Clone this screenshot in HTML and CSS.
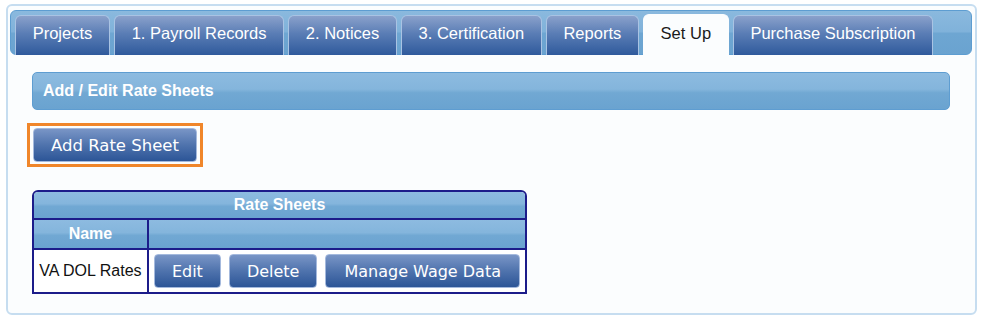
FILE: index.html
```html
<!DOCTYPE html>
<html lang="en">
<head>
  <meta charset="UTF-8">
  <title>Set Up - Rate Sheets</title>
  <link rel="stylesheet" href="styles.css">
</head>
<body>

<div class="panel">
  <ul class="tabs">
    <li class="tab">Projects</li>
    <li class="tab">1. Payroll Records</li>
    <li class="tab">2. Notices</li>
    <li class="tab">3. Certification</li>
    <li class="tab">Reports</li>
    <li class="tab active">Set Up</li>
    <li class="tab">Purchase Subscription</li>
  </ul>

  <div class="content">
    <div class="bar">Add / Edit Rate Sheets</div>

    <div class="focus">
      <button class="btn big">Add Rate Sheet</button>
    </div>

    <div class="sheets">
      <table>
        <tr>
          <th class="title" colspan="2">Rate Sheets</th>
        </tr>
        <tr>
          <th class="name-col">Name</th>
          <th class="act-col"></th>
        </tr>
        <tr>
          <td class="name-col">VA DOL Rates</td>
          <td class="act-col">
            <div class="actions">
              <button class="btn">Edit</button>
              <button class="btn">Delete</button>
              <button class="btn">Manage Wage Data</button>
            </div>
          </td>
        </tr>
      </table>
    </div>
  </div>
</div>

</body>
</html>
```

FILE: styles.css
```css
body {
  margin: 4px 5px 0 6px;
  background: #fff;
  font-family: 'Liberation Sans', Arial, sans-serif;
}
.panel {
  height: 311px;
  box-sizing: border-box;
  border: 2px solid #c6ddf0;
  border-radius: 6px;
  background: #fbfdfe;
  padding: 4px 3px 0 2px;
}
.tabs {
  display: flex;
  align-items: flex-end;
  gap: 4px;
  list-style: none;
  margin: 0;
  height: 45px;
  box-sizing: border-box;
  padding: 0 0 0 4px;
  border: 1px solid #5d9dd1;
  border-radius: 6px;
  background: linear-gradient(#8ab9de 0%, #80b2da 48%, #6ea6d2 52%, #6aa3d0 100%);
}
.tab {
  height: 40px;
  box-sizing: border-box;
  display: flex;
  align-items: center;
  padding: 0 16.7px 4px;
  border: 1px solid #a9c3e3;
  border-bottom: none;
  border-radius: 6px 6px 0 0;
  background: linear-gradient(#8aa1cb 0%, #5a7db5 45%, #2f5a9c 100%);
  color: #fff;
  font-size: 16.5px;
  white-space: nowrap;
  margin-bottom: -1px;
}
.tab.active {
  background: #fbfdfe;
  color: #1a1a1a;
  border-color: #fbfdfe;
  height: 41px;
}
.content {
  padding: 17px 22px 0 22px;
}
.bar {
  height: 38px;
  box-sizing: border-box;
  display: flex;
  align-items: center;
  padding-left: 10px;
  border: 1px solid #5e9dd1;
  border-radius: 5px;
  background: linear-gradient(#8dbbe0 0%, #84b5dc 45%, #71a8d3 55%, #6aa3d0 100%);
  color: #fff;
  font-weight: bold;
  font-size: 16px;
}
.focus {
  display: inline-block;
  margin: 13px 0 0 -5px;
  padding: 2px 3px;
  border: 3px solid #f0862a;
}
.btn {
  display: block;
  flex-shrink: 0;
  height: 34px;
  padding: 0 17px;
  border: 1px solid #a4b9dd;
  border-radius: 4px;
  background: linear-gradient(#7995c6 0%, #4f73ad 50%, #2c5597 100%);
  color: #fff;
  font-family: 'DejaVu Sans', Verdana, sans-serif;
  font-size: 16px;
  white-space: nowrap;
  cursor: pointer;
}
.btn.big {
  width: 164px;
  padding: 0;
  font-size: 16.5px;
}
.sheets {
  width: 491px;
  margin-top: 23px;
  border: 2px solid #1c1c8a;
  border-radius: 6px 6px 0 0;
  overflow: hidden;
}
table {
  width: 100%;
  border-collapse: separate;
  border-spacing: 0;
}
th {
  background: linear-gradient(#8dbbe0 0%, #84b5dc 45%, #71a8d3 55%, #6aa3d0 100%);
  color: #fff;
  font-size: 16px;
  font-weight: bold;
  padding: 0;
  border-bottom: 2px solid #1c1c8a;
}
th.title {
  height: 26px;
}
tr:nth-child(2) th {
  height: 28px;
}
.name-col {
  width: 115px;
  border-right: 2px solid #1c1c8a;
  text-align: center;
}
td {
  padding: 4px 5px;
  height: 34px;
  font-size: 16px;
  color: #111;
  background: #fff;
}
td.name-col {
  padding: 0;
}
.actions {
  display: flex;
  gap: 8px;
}
.actions .btn:last-child {
  padding: 0 18px;
}
```
